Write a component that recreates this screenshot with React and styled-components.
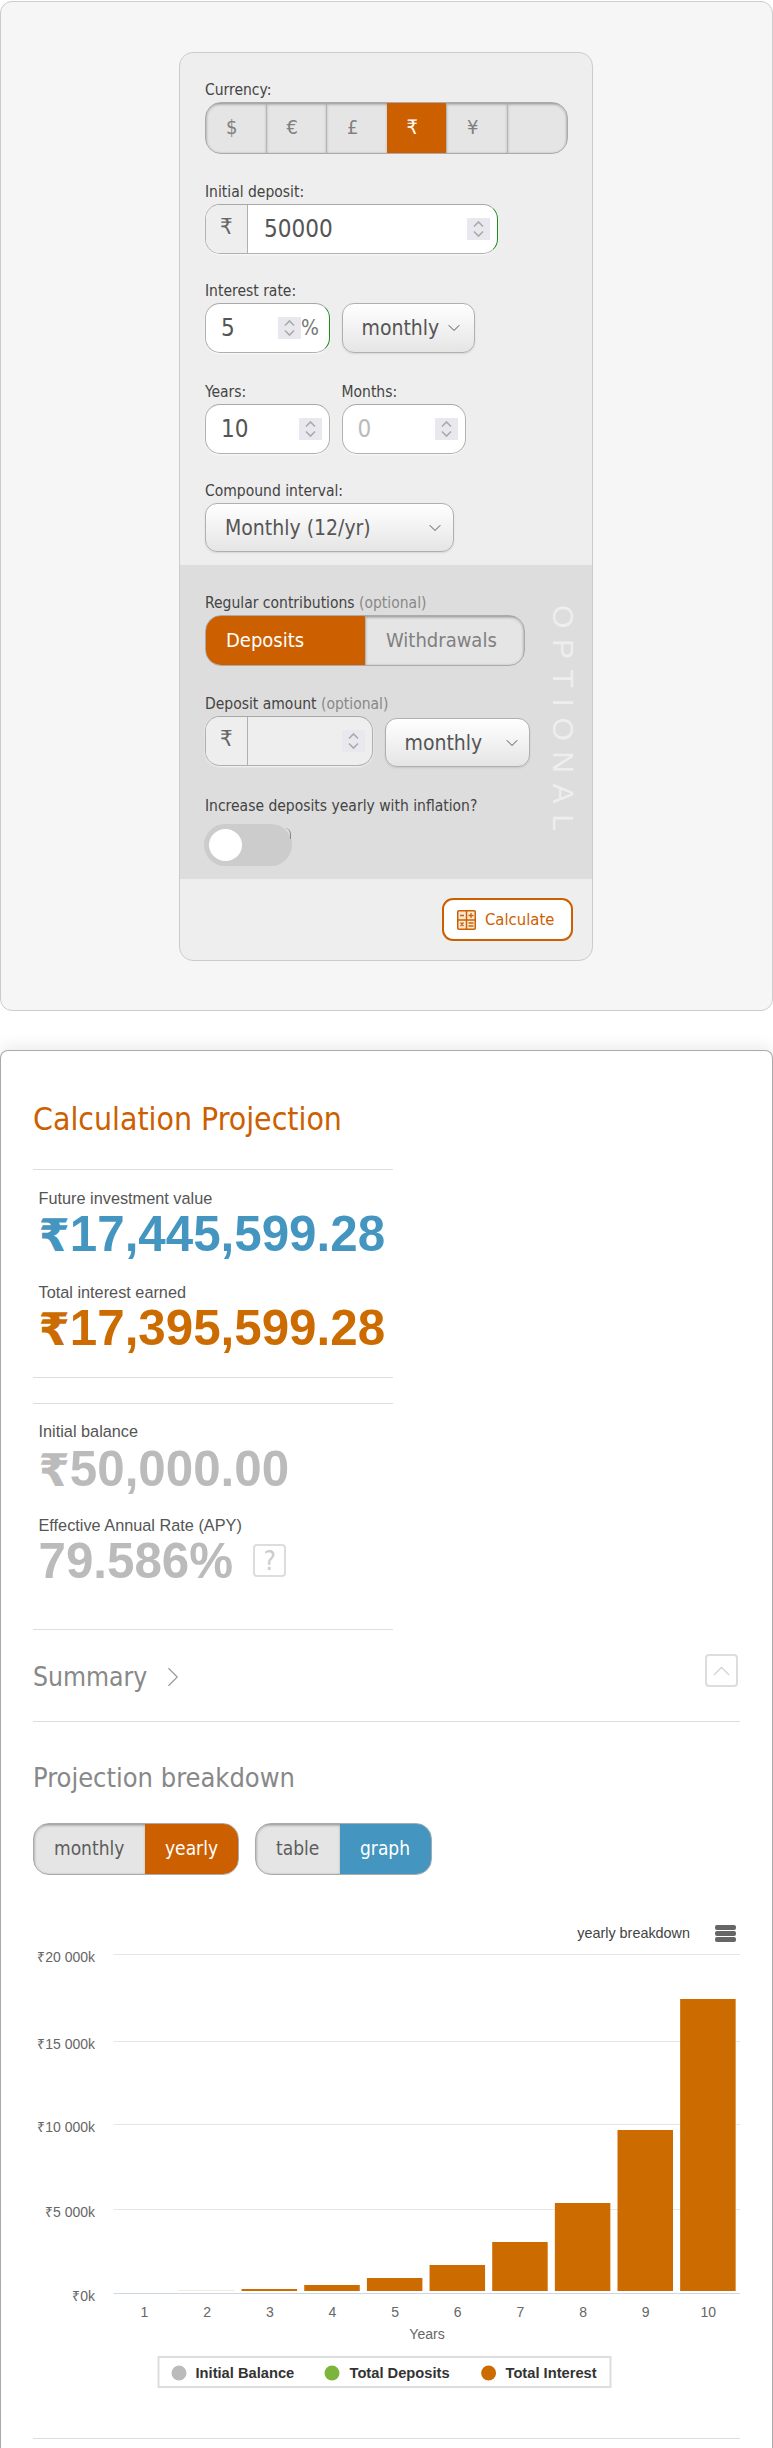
import styled, { createGlobalStyle } from 'styled-components';
import { ChevronDown, ChevronRight, ChevronUp } from 'lucide-react';

const ORANGE = '#cc6000';
const CHART_ORANGE = '#cc6c00';
const BLUE = '#4496c1';
const UI_FONT = '"DejaVu Sans Condensed", "DejaVu Sans", sans-serif';
const DATA_FONT = '"Liberation Sans", Arial, sans-serif';

const GlobalStyle = createGlobalStyle`
  html, body {
    margin: 0;
    padding: 0;
    background: #fff;
    overflow: hidden;
  }
  body {
    font-family: ${UI_FONT};
    color: #444;
  }
  * {
    box-sizing: border-box;
  }
`;

const CalculatorPanel = styled.section`
  height: 1010px;
  margin-top: 1px;
  padding: 50px 0 0 178px;
  background: #f6f6f6;
  border: 1px solid #ccc;
  border-radius: 12px;
`;

const FormCard = styled.form`
  width: 414px;
  height: 909px;
  padding-top: 25px;
  background: #eee;
  border: 1px solid #ccc;
  border-radius: 14px;
  overflow: hidden;
`;

const FormBody = styled.div`
  padding: 0 0 13px 25px;
`;

const Field = styled.div`
  margin-top: ${p => p.$top ?? 0}px;
`;

const Label = styled.div`
  height: 24px;
  font-size: 15.5px;
  line-height: 24px;
  color: #444;
  white-space: nowrap;
`;

const Optional = styled.span`
  color: #888;
`;

const Row = styled.div`
  display: flex;
  align-items: ${p => p.$align || 'flex-start'};
  gap: 11.5px;
`;

const SegmentGroup = styled.div`
  display: flex;
  width: ${p => p.$width}px;
  height: ${p => p.$height || 52}px;
  background: #e5e5e5;
  border: 1px solid #aaa;
  border-radius: 16px;
  overflow: hidden;
  box-shadow: inset 0 1px 3px rgba(0, 0, 0, 0.25);
`;

const Segment = styled.div`
  flex: ${p => (p.$width ? `0 0 ${p.$width}px` : 1)};
  padding-left: 20px;
  font-size: ${p => p.$size || 20}px;
  line-height: 48px;
  color: ${p => (p.$bg ? '#fff' : p.$ink || '#808080')};
  background: ${p => p.$bg || 'transparent'};
  box-shadow: ${p => (p.$bg ? 'none' : 'inset 0 1px 3px rgba(0, 0, 0, 0.18)')};
  border-left: ${p => (p.$first || p.$bg ? '0' : '1px solid #b5b5b5')};
  white-space: nowrap;
`;

const InputBox = styled.div`
  display: flex;
  align-items: center;
  width: ${p => p.$width}px;
  height: 50px;
  padding-right: 7px;
  background: ${p => (p.$muted ? '#eee' : '#fff')};
  border: 1px solid #b0b0b0;
  border-top-color: #a8a8a8;
  border-right: ${p => (p.$valid ? '1.5px solid #1d8c1d' : '1px solid #b0b0b0')};
  border-radius: 15px;
  overflow: hidden;
  box-shadow: 0 1px 2px rgba(255, 255, 255, 0.7);
`;

const Prefix = styled.div`
  flex: 0 0 42px;
  height: 100%;
  padding-left: 14px;
  font-size: 22px;
  line-height: 44px;
  color: #666;
  background: #eee;
  border-right: 1px solid #b0b0b0;
`;

const NumberInput = styled.input`
  flex: 1;
  min-width: 0;
  height: 100%;
  padding: 0 0 0 ${p => p.$pad || 15}px;
  font-family: ${UI_FONT};
  font-size: 24px;
  color: #555;
  background: transparent;
  border: 0;
  outline: 0;
  &::placeholder {
    color: #bbb;
    opacity: 1;
  }
`;

const Spinner = styled.span`
  flex: 0 0 23px;
  display: flex;
  align-items: center;
  justify-content: center;
  height: 22px;
  background: #e8e8ee;
`;

const Suffix = styled.span`
  width: 21px;
  font-size: 21px;
  color: #777;
`;

const SelectBox = styled.div`
  display: flex;
  align-items: center;
  justify-content: space-between;
  width: ${p => p.$width}px;
  height: ${p => p.$height || 50}px;
  margin-top: ${p => p.$top || 0}px;
  padding: 0 ${p => p.$right || 10}px 0 19px;
  font-size: 21px;
  color: #555;
  background: linear-gradient(#fff, #e5e5e5);
  border: 1px solid #b0b0b0;
  border-radius: 12px;
  box-shadow: 0 1px 2px rgba(0, 0, 0, 0.1);
  white-space: nowrap;
`;

const OptionalSection = styled.div`
  position: relative;
  height: 314px;
  padding: 26px 0 0 25px;
  background: #ddd;
`;

const OptionalMark = styled.div`
  position: absolute;
  top: 40px;
  left: 368px;
  font-family: ${DATA_FONT};
  font-size: 30px;
  line-height: 30px;
  letter-spacing: 10.6px;
  color: #eee;
  writing-mode: vertical-rl;
`;

const Switch = styled.div`
  position: relative;
  width: 88px;
  height: 42px;
  margin-top: 6px;
  margin-left: -1px;
  background: #ccc;
  border-radius: 21px;
  &::after {
    content: '';
    position: absolute;
    top: 4px;
    right: 1px;
    width: 6px;
    height: 11px;
    border-top-right-radius: 6px;
    border-right: 1px solid #888;
  }
`;

const SwitchKnob = styled.span`
  position: absolute;
  top: 5px;
  left: 5px;
  width: 33px;
  height: 32px;
  background: #fff;
  border-radius: 50%;
`;

const FormFooter = styled.div`
  display: flex;
  justify-content: flex-end;
  padding: 19px 19px 0 0;
`;

const CalculateButton = styled.button`
  display: flex;
  align-items: center;
  gap: 9px;
  width: 131px;
  height: 43px;
  padding: 0 0 0 13px;
  font-family: ${UI_FONT};
  font-size: 16.5px;
  color: ${ORANGE};
  background: #fff;
  border: 2px solid ${ORANGE};
  border-radius: 11px;
`;

const ResultsPanel = styled.section`
  height: 1398px;
  margin-top: 39px;
  padding: 48px 32px 0;
  background: #fff;
  border: 1px solid #aaa;
  border-bottom: 0;
  border-radius: 8px 8px 0 0;
  box-shadow: 0 -4px 16px rgba(0, 0, 0, 0.08);
`;

const Title = styled.h2`
  margin: 0;
  font-size: 31.7px;
  font-weight: normal;
  line-height: 40px;
  color: ${ORANGE};
`;

const Rule = styled.hr`
  width: ${p => p.$width || 707}px;
  height: 1px;
  margin: ${p => p.$top || 0}px 0 0;
  background: #ddd;
  border: 0;
`;

const StatBlock = styled.div`
  margin-top: ${p => p.$top}px;
  padding-left: 5.5px;
  font-family: ${DATA_FONT};
`;

const StatLabel = styled.div`
  font-size: 16.3px;
  line-height: 21px;
  color: #555;
`;

const StatValue = styled.div`
  display: flex;
  align-items: flex-start;
  gap: 20px;
  margin-top: ${p => p.$top || 0}px;
  font-size: 49.3px;
  font-weight: bold;
  line-height: 50px;
  color: ${p => p.$color};
`;

const RupeeSign = styled.span`
  font-family: "DejaVu Sans", sans-serif;
  font-size: 45px;
  line-height: 0;
`;

const Amount = styled.span`
  white-space: nowrap;
`;

const IconBox = styled.span`
  display: flex;
  align-items: center;
  justify-content: center;
  flex: 0 0 33px;
  width: 33px;
  height: 33px;
  margin-top: ${p => p.$top || 0}px;
  font-family: ${UI_FONT};
  font-size: 26px;
  font-weight: normal;
  color: #ccc;
  border: 2px solid #ddd;
  border-radius: 4px;
`;

const SummaryRow = styled.div`
  display: flex;
  align-items: flex-start;
  justify-content: space-between;
  width: 707px;
  height: 92px;
  padding: 24px 2px 0 0;
  border-bottom: 1px solid #ddd;
`;

const SummaryTitle = styled.div`
  display: flex;
  align-items: center;
  gap: 9px;
  margin-top: 5px;
  font-size: 26.3px;
  line-height: 36px;
  color: #888;
`;

const SectionTitle = styled.h3`
  margin: 38px 0 0;
  font-size: 27px;
  font-weight: normal;
  line-height: 36px;
  color: #888;
`;

const ToggleBar = styled.div`
  display: flex;
  gap: 16px;
  margin-top: 27px;
`;

const Chart = styled.svg`
  display: block;
  margin-top: 30px;
`;

const currencies = [
  { symbol: '$' },
  { symbol: '€' },
  { symbol: '£' },
  { symbol: '₹', active: true },
  { symbol: '¥' },
  { symbol: '' },
];

// values read off the graph, as pixel tops of each bar
const barTops = [2291, 2290, 2289, 2285, 2278, 2265, 2242, 2203, 2130, 1999];
const yTicks = [
  { label: '₹20 000k', y: 1954 },
  { label: '₹15 000k', y: 2041 },
  { label: '₹10 000k', y: 2124 },
  { label: '₹5 000k', y: 2209 },
  { label: '₹0k', y: 2293 },
];
const legendItems = [
  { label: 'Initial Balance', color: '#bbb', cx: 179, x: 195.5 },
  { label: 'Total Deposits', color: '#7cb53b', cx: 332, x: 349.5 },
  { label: 'Total Interest', color: CHART_ORANGE, cx: 488.6, x: 505.5 },
];

function SpinIcon() {
  return (
    <svg width="11" height="18" viewBox="0 0 11 18" fill="none" stroke="#aaa" strokeWidth="1.6">
      <path d="M1 6.5 5.5 2l4.5 4.5" />
      <path d="M1 11.5 5.5 16l4.5-4.5" />
    </svg>
  );
}

function CalculatorIcon() {
  return (
    <svg width="19" height="20" viewBox="0 0 19 20" fill="none" stroke={ORANGE}>
      <rect x="0.75" y="0.75" width="17.5" height="18.5" rx="1" fill="#fbe9d6" strokeWidth="1.5" />
      <path d="M9.5 1v18M1 10h17" strokeWidth="1.5" />
      <path d="M3 5.5h4M11.5 5.5h5M14 3v5M3.5 12.5l3 3.5M6.5 12.5l-3 3.5M11.5 13h5M11.5 16h5" strokeWidth="1.3" />
    </svg>
  );
}

function Money({ value }) {
  return (
    <Amount>
      <RupeeSign>₹</RupeeSign>
      {value}
    </Amount>
  );
}

function SelectChevron() {
  return <ChevronDown size={20} strokeWidth={1.1} color="#444" />;
}

function ProjectionChart() {
  const left = 80.5;
  const slot = 62.65;
  const ox = 33;
  const oy = 1905;
  return (
    <Chart width="707" height="495" viewBox="0 0 707 495" fontFamily={DATA_FONT}>
      <text x={657} y={33} textAnchor="end" fontSize="14.4" fill="#444">yearly breakdown</text>
      <rect x={682} y={20} width={21} height={5} rx={2} fill="#666" />
      <rect x={682} y={26} width={21} height={5} rx={2} fill="#666" />
      <rect x={682} y={32} width={21} height={5} rx={2} fill="#666" />
      {yTicks.map(t => (
        <g key={t.label}>
          <line
            x1={left}
            x2={707}
            y1={t.y - oy + 0.5}
            y2={t.y - oy + 0.5}
            stroke={t.label === '₹0k' ? '#ccd6eb' : '#e6e6e6'}
          />
          <text x={62} y={t.y - oy + 8} textAnchor="end" fontSize="14" fill="#666">{t.label}</text>
        </g>
      ))}
      {barTops.map((top, i) => (
        <g key={i}>
          {i > 0 && (
            <rect
              x={left + slot * i + 2.8}
              y={top - oy}
              width={55.5}
              height={2291 - top}
              fill={i === 1 ? '#f7ead9' : CHART_ORANGE}
            />
          )}
          <text
            x={left + slot * i + 31}
            y={2317 - oy}
            textAnchor="middle"
            fontSize="14"
            fill="#666"
          >
            {i + 1}
          </text>
        </g>
      ))}
      <text x={394} y={2339 - oy} textAnchor="middle" fontSize="14" fill="#666">Years</text>
      <rect x={125.5} y={2357 - oy} width={452} height={30} fill="#fff" stroke="#ddd" strokeWidth="2" />
      {legendItems.map(item => (
        <g key={item.label}>
          <circle cx={item.cx - ox} cy={2373 - oy} r="7.5" fill={item.color} />
          <text x={item.x - ox} y={2378 - oy} fontSize="14.7" fontWeight="bold" fill="#333">{item.label}</text>
        </g>
      ))}
    </Chart>
  );
}

export default function App() {
  return (
    <>
      <GlobalStyle />
      <CalculatorPanel>
        <FormCard>
          <FormBody>
            <Field>
              <Label>Currency:</Label>
              <SegmentGroup $width={363}>
                {currencies.map((c, i) => (
                  <Segment key={i} $first={i === 0} $bg={c.active ? ORANGE : undefined}>
                    {c.symbol}
                  </Segment>
                ))}
              </SegmentGroup>
            </Field>

            <Field $top={26}>
              <Label>Initial deposit:</Label>
              <InputBox $width={293} $valid>
                <Prefix>₹</Prefix>
                <NumberInput readOnly value="50000" $pad={16} />
                <Spinner><SpinIcon /></Spinner>
              </InputBox>
            </Field>

            <Field $top={25}>
              <Label>Interest rate:</Label>
              <Row>
                <InputBox $width={125} $valid>
                  <NumberInput readOnly value="5" />
                  <Spinner><SpinIcon /></Spinner>
                  <Suffix>%</Suffix>
                </InputBox>
                <SelectBox $width={133}>
                  monthly
                  <SelectChevron />
                </SelectBox>
              </Row>
            </Field>

            <Field $top={27}>
              <Row>
                <div>
                  <Label>Years:</Label>
                  <InputBox $width={125}>
                    <NumberInput readOnly value="10" />
                    <Spinner><SpinIcon /></Spinner>
                  </InputBox>
                </div>
                <div>
                  <Label>Months:</Label>
                  <InputBox $width={124}>
                    <NumberInput readOnly placeholder="0" />
                    <Spinner><SpinIcon /></Spinner>
                  </InputBox>
                </div>
              </Row>
            </Field>

            <Field $top={25}>
              <Label>Compound interval:</Label>
              <SelectBox $width={249} $height={49} $right={8}>
                Monthly (12/yr)
                <SelectChevron />
              </SelectBox>
            </Field>
          </FormBody>

          <OptionalSection>
            <OptionalMark>OPTIONAL</OptionalMark>
            <Field>
              <Label>Regular contributions <Optional>(optional)</Optional></Label>
              <SegmentGroup $width={320} $height={51}>
                <Segment $first $bg={ORANGE} $width={159}>Deposits</Segment>
                <Segment>Withdrawals</Segment>
              </SegmentGroup>
            </Field>

            <Field $top={26}>
              <Label>Deposit amount <Optional>(optional)</Optional></Label>
              <Row>
                <InputBox $width={168} $muted>
                  <Prefix>₹</Prefix>
                  <NumberInput readOnly />
                  <Spinner><SpinIcon /></Spinner>
                </InputBox>
                <SelectBox $width={145} $height={49} $top={2} $right={7}>
                  monthly
                  <SelectChevron />
                </SelectBox>
              </Row>
            </Field>

            <Field $top={27}>
              <Label>Increase deposits yearly with inflation?</Label>
              <Switch><SwitchKnob /></Switch>
            </Field>
          </OptionalSection>

          <FormFooter>
            <CalculateButton type="button">
              <CalculatorIcon />
              Calculate
            </CalculateButton>
          </FormFooter>
        </FormCard>
      </CalculatorPanel>

      <ResultsPanel>
        <Title>Calculation Projection</Title>
        <Rule $width={360} $top={30} />

        <StatBlock $top={18}>
          <StatLabel>Future investment value</StatLabel>
          <StatValue $color={BLUE}><Money value="17,445,599.28" /></StatValue>
        </StatBlock>
        <StatBlock $top={23}>
          <StatLabel>Total interest earned</StatLabel>
          <StatValue $color={CHART_ORANGE}><Money value="17,395,599.28" /></StatValue>
        </StatBlock>

        <Rule $width={360} $top={24} />
        <Rule $width={360} $top={25} />

        <StatBlock $top={17}>
          <StatLabel>Initial balance</StatLabel>
          <StatValue $color="#bbb" $top={2}><Money value="50,000.00" /></StatValue>
        </StatBlock>
        <StatBlock $top={21}>
          <StatLabel>Effective Annual Rate (APY)</StatLabel>
          <StatValue $color="#bbb">
            79.586%
            <IconBox $top={8}>?</IconBox>
          </StatValue>
        </StatBlock>

        <Rule $width={360} $top={43} />

        <SummaryRow>
          <SummaryTitle>
            Summary
            <ChevronRight size={34} strokeWidth={0.8} color="#999" />
          </SummaryTitle>
          <IconBox>
            <ChevronUp size={34} strokeWidth={1} color="#ccc" />
          </IconBox>
        </SummaryRow>

        <SectionTitle>Projection breakdown</SectionTitle>
        <ToggleBar>
          <SegmentGroup $width={206}>
            <Segment $first $width={111} $size={19} $ink="#5c5c5c">monthly</Segment>
            <Segment $bg={ORANGE} $size={19}>yearly</Segment>
          </SegmentGroup>
          <SegmentGroup $width={177}>
            <Segment $first $width={84} $size={19} $ink="#5c5c5c">table</Segment>
            <Segment $bg={BLUE} $size={19}>graph</Segment>
          </SegmentGroup>
        </ToggleBar>

        <ProjectionChart />
        <Rule $top={38} />
      </ResultsPanel>
    </>
  );
}
